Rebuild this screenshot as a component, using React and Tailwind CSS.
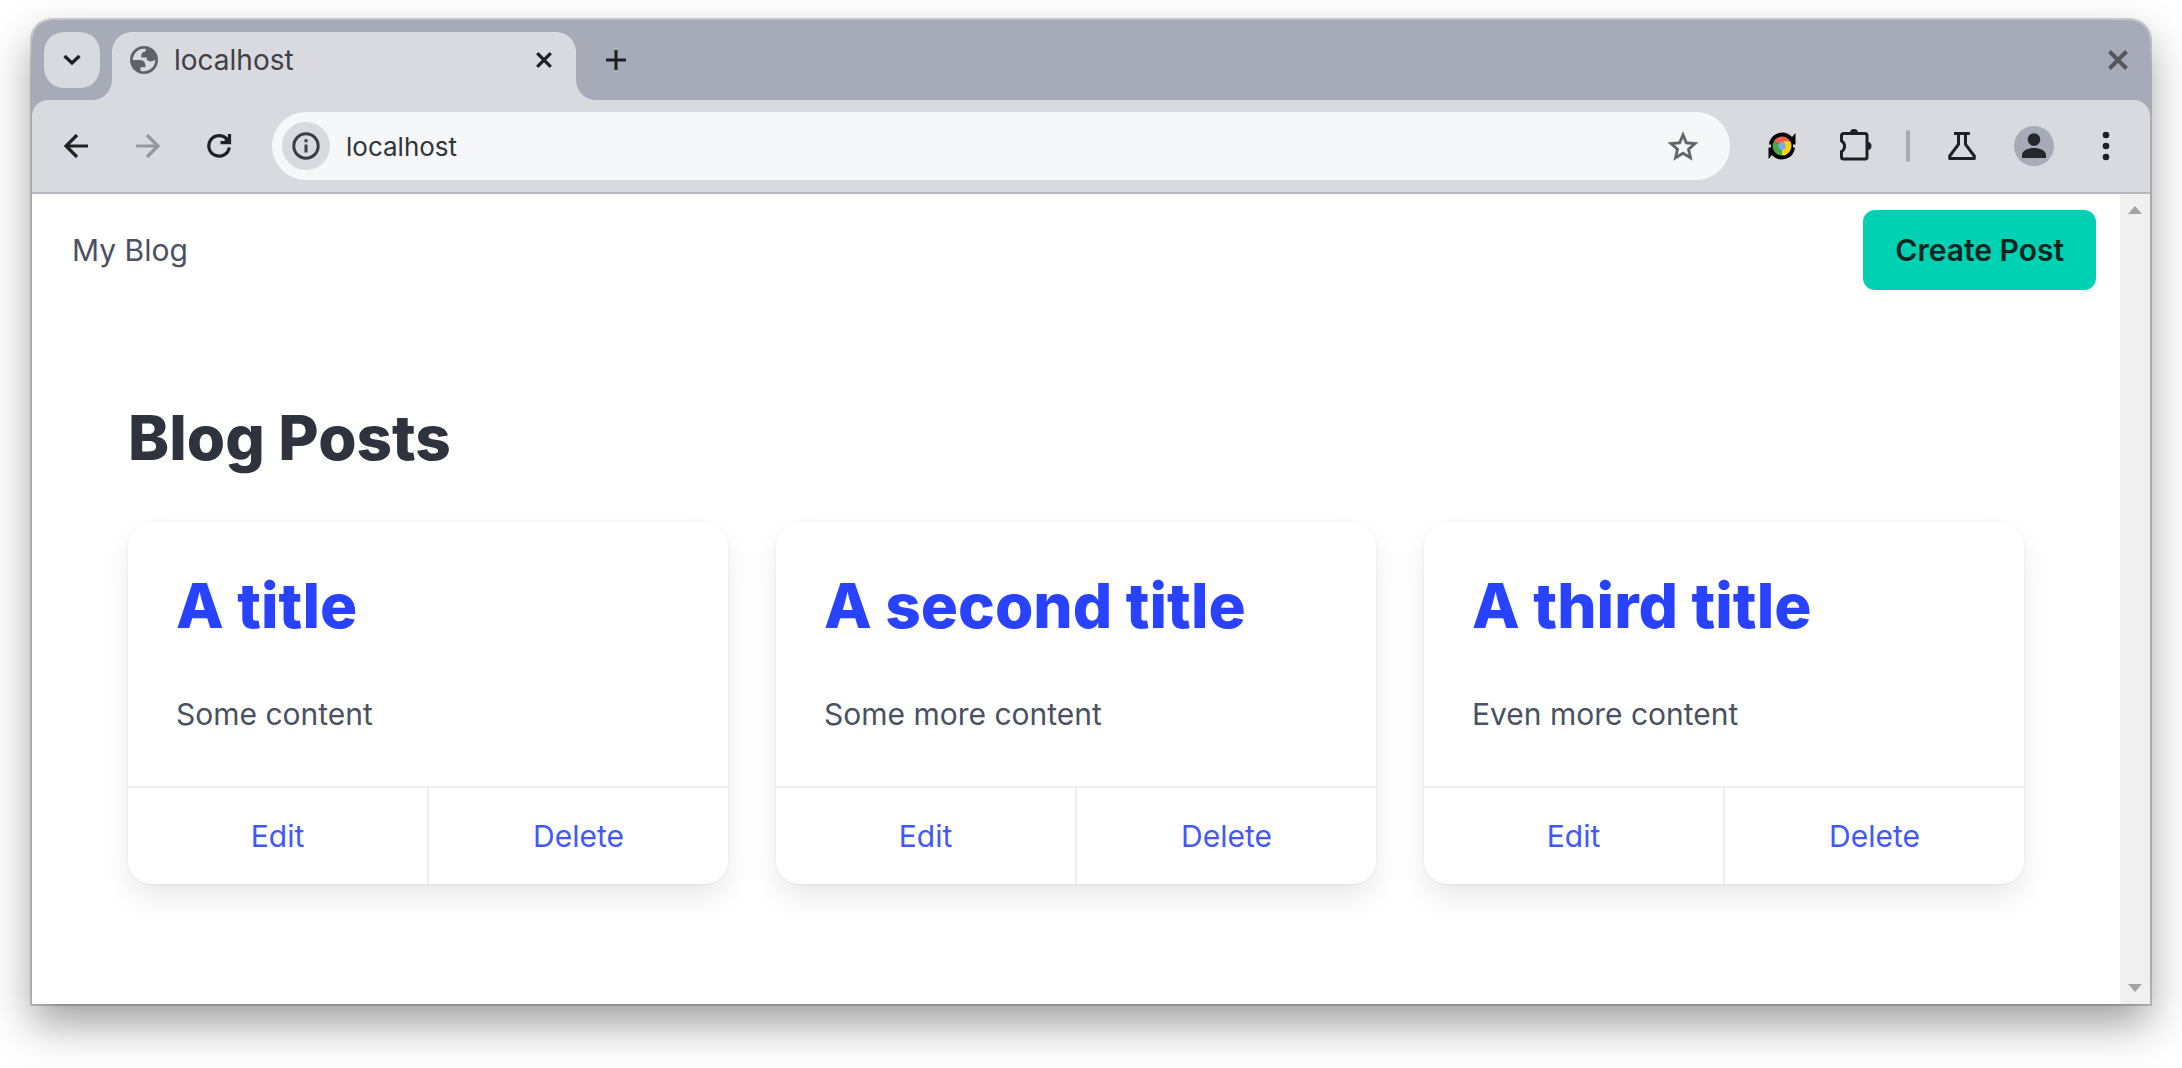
const posts = [
  { title: "A title", body: "Some content" },
  { title: "A second title", body: "Some more content" },
  { title: "A third title", body: "Even more content" },
];

function ChevronIcon() {
  return (
    <svg width="20" height="20" viewBox="0 0 20 20" fill="none" stroke="#1f2023" strokeWidth="3.400" aria-hidden="true">
      <path d="M2.500 6l7.500 7 7.500-7" />
    </svg>
  );
}

function GlobeIcon() {
  return (
    <svg width="28" height="28" viewBox="2 2 20 20" fill="#5f6368" fillRule="evenodd" aria-hidden="true">
      <path d="M12 2a10 10 0 1 1 0 20 10 10 0 0 1 0-20zM4 12h4.400c3.407.022 4.922 1.730 4.543 5.127H9.488v2.470a8.004 8.004 0 0 0 10.498-8.083C19.327 12.504 18.332 13 17 13c-2.137 0-3.206-.916-3.206-2.750h-3.748c-.274-2.728.683-4.092 2.870-4.092 0-.975.327-1.597.811-1.970A8.004 8.004 0 0 0 4 12z" />
    </svg>
  );
}

function CrossIcon({ className }) {
  return (
    <svg className={className} viewBox="0 0 20 20" fill="none" stroke="currentColor" strokeWidth="4" aria-hidden="true">
      <path d="M1.500 1.500l17 17M18.500 1.500l-17 17" />
    </svg>
  );
}

function PlusIcon() {
  return (
    <svg width="20" height="20" viewBox="0 0 20 20" fill="none" stroke="#1f2023" strokeWidth="3" aria-hidden="true">
      <path d="M10 0v20M0 10h20" />
    </svg>
  );
}

function ArrowIcon({ className }) {
  return (
    <svg className={className} width="24" height="24" viewBox="0 0 24 24" fill="none" stroke="currentColor" strokeWidth="3.200" aria-hidden="true">
      <path d="M13 1L2 12l11 11M2 12h22" />
    </svg>
  );
}

function ReloadIcon() {
  return (
    <svg width="26" height="26" viewBox="0 0 26 26" fill="none" stroke="#1f2023" strokeWidth="3.200" aria-hidden="true">
      <path d="M23.300 14.500A10.300 10.300 0 1 1 21 6.200l2 2.300" />
      <path d="M23.500 1v8.700h-9" />
      <path d="M24 2v8h-8z" fill="#1f2023" stroke="none" />
    </svg>
  );
}

function InfoIcon() {
  return (
    <svg width="28" height="28" viewBox="0 0 28 28" fill="none" stroke="#3c3d41" strokeWidth="3" aria-hidden="true">
      <circle cx="14" cy="14" r="12.200" />
      <path d="M14 12.500v8M14 7.300v3" />
    </svg>
  );
}

function StarIcon() {
  return (
    <svg width="30" height="30" viewBox="2 1.500 20 20" fill="#5f6368" stroke="#5f6368" strokeWidth="0.300" aria-hidden="true">
      <path d="M22 9.240l-7.190-.62L12 2 9.190 8.630 2 9.240l5.460 4.730L5.820 21 12 17.270 18.180 21l-1.630-7.030L22 9.240zM12 15.400l-3.760 2.270 1-4.280-3.320-2.880 4.380-.38L12 6.100l1.710 4.040 4.380.38-3.320 2.880 1 4.280L12 15.400z" />
    </svg>
  );
}

function ReloaderIcon() {
  return (
    <svg width="28" height="30" viewBox="0 0 28 30" aria-hidden="true">
      <path d="M1 13.500A13.200 13.200 0 0 1 24 6L27.500 2v11.500zM27 16.500A13.200 13.200 0 0 1 4 24L.5 28V16.500z" fill="#000" />
      <circle cx="14" cy="15" r="11" fill="#000" />
      <path d="M14 15L5.800 10.300a9.500 9.500 0 0 1 16.400 0z" fill="#ea6250" />
      <path d="M14 15L16 10.300h6.200A9.500 9.500 0 0 1 14 24.500z" fill="#fdd304" />
      <path d="M14 15v9.500A9.500 9.500 0 0 1 5.800 10.300z" fill="#48a84c" />
      <circle cx="14" cy="15" r="3.800" fill="#7baaf0" />
    </svg>
  );
}

function PuzzleIcon() {
  return (
    <svg width="32" height="34" viewBox="0 0 32 34" fill="none" aria-hidden="true">
      <path d="M3.500 6.500H25a2 2 0 0 1 2 2V30a2 2 0 0 1-2 2H3.500a2 2 0 0 1-2-2v-5.500a6 6 0 0 0 0-10.500V8.500a2 2 0 0 1 2-2z" stroke="#1f2023" strokeWidth="3" strokeLinejoin="round" />
      <path d="M10 6a4 4 0 0 1 8 0zM27.500 15a4 4 0 0 1 0 8z" fill="#1f2023" />
    </svg>
  );
}

function FlaskIcon() {
  return (
    <svg width="28" height="30" viewBox="0 0 28 30" fill="none" stroke="#1f2023" strokeWidth="3" strokeLinejoin="round" aria-hidden="true">
      <path d="M6 2.400h16M10.500 2.400v11L1.700 25v2.600h24.600V25l-8.800-11.600v-11" />
    </svg>
  );
}

function PersonIcon() {
  return (
    <svg width="26" height="26" viewBox="0 0 26 26" fill="#24262c" aria-hidden="true">
      <circle cx="13" cy="6.500" r="6.300" />
      <path d="M1 25v-3c0-4.500 6.500-7 12-7s12 2.500 12 7v3z" />
    </svg>
  );
}

function DotsIcon() {
  return (
    <svg width="8" height="30" viewBox="0 0 8 30" fill="#1f2023" aria-hidden="true">
      <circle cx="4" cy="4" r="3.300" />
      <circle cx="4" cy="15" r="3.300" />
      <circle cx="4" cy="26" r="3.300" />
    </svg>
  );
}

function Flare({ className }) {
  return (
    <svg className={className} width="20" height="20" viewBox="0 0 20 20" fill="#d9dae0" aria-hidden="true">
      <path d="M20 0v20H0A20 20 0 0 0 20 0z" />
    </svg>
  );
}

function TabStrip() {
  return (
    <div className="flex h-20 items-start bg-[#a7abb8] pt-3 pl-3">
      <button type="button" aria-label="Search tabs" className="flex size-14 items-center justify-center rounded-[20px] bg-[#d9dae0]">
        <ChevronIcon />
      </button>
      <div className="relative ml-3 flex h-[68px] w-[464px] items-start rounded-t-[20px] bg-[#d9dae0] pl-[18px]">
        <Flare className="absolute right-full bottom-0" />
        <Flare className="absolute bottom-0 left-full -scale-x-100" />
        <div className="flex h-14 flex-1 items-center">
          <GlobeIcon />
          <span className="ml-4 text-[28px] leading-9 text-[#3f4045]">localhost</span>
          <button type="button" aria-label="Close tab" className="mr-6 ml-auto text-[#1f2023]">
            <CrossIcon className="size-4" />
          </button>
        </div>
      </div>
      <button type="button" aria-label="New tab" className="ml-[30px] flex h-14 items-center">
        <PlusIcon />
      </button>
      <button type="button" aria-label="Close window" className="mr-[22px] ml-auto flex h-14 items-center text-[#55575c]">
        <CrossIcon className="size-5" />
      </button>
    </div>
  );
}

function Toolbar() {
  return (
    <div className="bg-[#a7abb8]">
      <div className="flex h-[94px] items-center rounded-t-2xl border-b-2 border-[#b8b9bf] bg-[#d9dae0] pl-8">
        <button type="button" aria-label="Back" className="text-[#1f2023]">
          <ArrowIcon />
        </button>
        <button type="button" aria-label="Forward" className="ml-12 text-[#96979c]">
          <ArrowIcon className="-scale-x-100" />
        </button>
        <button type="button" aria-label="Reload" className="ml-[46px]">
          <ReloadIcon />
        </button>
        <div className="ml-10 flex h-[68px] flex-1 items-center rounded-full bg-[#f6f7f9] pr-8 pl-[10px]">
          <button type="button" aria-label="Site information" className="flex size-12 items-center justify-center rounded-full bg-[#d9dae0]">
            <InfoIcon />
          </button>
          <input
            type="text"
            aria-label="Address"
            defaultValue="localhost"
            className="ml-4 h-10 min-w-0 flex-1 bg-transparent text-[26px] text-[#333438] outline-none"
          />
          <button type="button" aria-label="Bookmark this page">
            <StarIcon />
          </button>
        </div>
        <button type="button" aria-label="Reloader extension" className="ml-[38px]">
          <ReloaderIcon />
        </button>
        <button type="button" aria-label="Extensions" className="ml-11 pb-1">
          <PuzzleIcon />
        </button>
        <span className="ml-[34px] h-8 w-1 rounded-full bg-[#a7abb8]" />
        <button type="button" aria-label="Labs" className="ml-[38px]">
          <FlaskIcon />
        </button>
        <button type="button" aria-label="Profile" className="ml-[38px] flex size-10 items-center justify-center rounded-full bg-[#a7abb8]">
          <PersonIcon />
        </button>
        <button type="button" aria-label="Menu" className="mr-10 ml-12">
          <DotsIcon />
        </button>
      </div>
    </div>
  );
}

function PostCard({ title, body }) {
  return (
    <article className="rounded-3xl bg-white shadow-[0_16px_32px_-4px_rgba(9,10,12,0.1),0_0_0_2px_rgba(9,10,12,0.02)]">
      <div className="p-12">
        <h2 className="mb-12 text-[62px] leading-[72px] font-extrabold">
          <a href="#post" className="text-[#2942ff]">{title}</a>
        </h2>
        <p>{body}</p>
      </div>
      <footer className="flex border-t-2 border-[#edeef3] text-center text-[#4258ff]">
        <a href="#edit" className="flex-1 border-r-2 border-[#edeef3] p-6">Edit</a>
        <a href="#delete" className="flex-1 p-6">Delete</a>
      </footer>
    </article>
  );
}

function Scrollbar() {
  return (
    <div className="flex w-[30px] flex-col items-center justify-between bg-[#f0f0f0] py-3" aria-hidden="true">
      <svg width="14" height="8" viewBox="0 0 14 8" fill="#a3a3a3"><path d="M0 8l7-8 7 8z" /></svg>
      <svg width="14" height="8" viewBox="0 0 14 8" fill="#a3a3a3"><path d="M0 0l7 8 7-8z" /></svg>
    </div>
  );
}

export default function App() {
  return (
    <div className="flex min-h-screen bg-white px-8 pt-5 pb-16 font-['Inter',sans-serif]">
      <div className="flex flex-1 flex-col overflow-hidden rounded-t-[20px] bg-white shadow-[0_0_0_2px_rgba(0,0,0,0.18),0_20px_44px_rgba(0,0,0,0.38)]">
        <TabStrip />
        <Toolbar />
        <div className="flex flex-1">
          <div className="flex-1 text-[30px] leading-[48px] text-[#4b5160]">
            <nav className="flex items-center justify-between py-4 pr-6 pl-10">
              <a href="#home">My Blog</a>
              <button type="button" className="rounded-xl bg-[#00d1b2] px-8 py-4 font-semibold text-[#00261f]">Create Post</button>
            </nav>
            <main className="p-24">
              <h1 className="mb-12 text-[62px] leading-[72px] font-extrabold text-[#2e333d]">Blog Posts</h1>
              <div className="grid grid-cols-3 gap-12">
                {posts.map((post) => (
                  <PostCard key={post.title} title={post.title} body={post.body} />
                ))}
              </div>
            </main>
          </div>
          <Scrollbar />
        </div>
      </div>
    </div>
  );
}
